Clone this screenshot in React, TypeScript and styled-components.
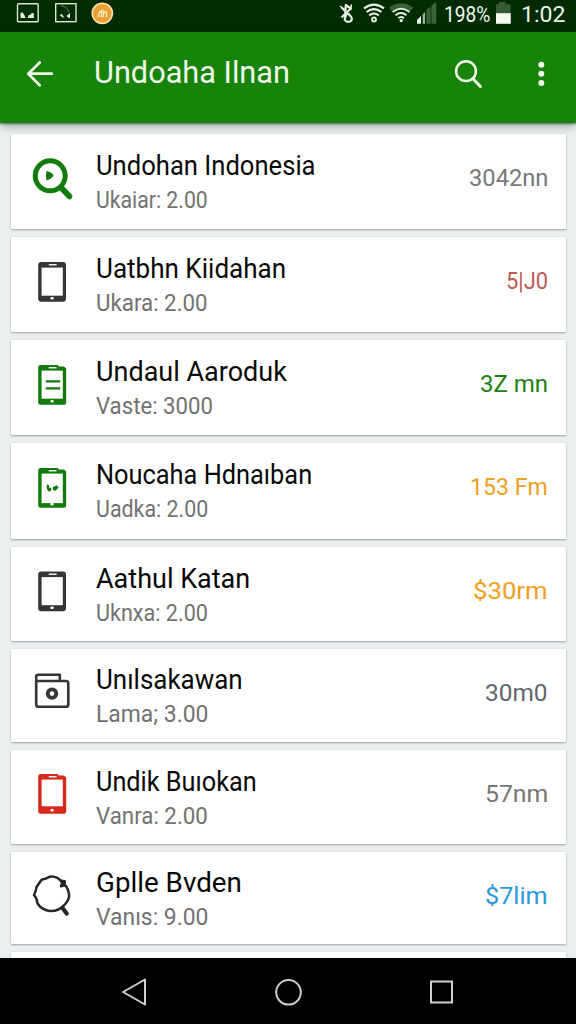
import React, { useLayoutEffect, useRef, useState } from "react";
import styled, { createGlobalStyle } from "styled-components";

const GlobalStyle = createGlobalStyle`
  * { box-sizing: border-box; }
  body { margin: 0; background: #000; font-family: Roboto, "Liberation Sans", sans-serif; }
  svg { display: block; flex: none; }
`;

const Screen = styled.div`
  width: 576px;
  height: 1024px;
  display: flex;
  flex-direction: column;
  overflow: hidden;
  background: #ebeff0;
`;

const StatusBar = styled.div`
  flex: none;
  height: 32px;
  display: flex;
  align-items: flex-start;
  justify-content: space-between;
  background: #022b01;
  color: #e9f5e6;
  font-size: 22.5px;
  line-height: 28px;
`;

const StatusGroup = styled.div<{ $end?: boolean }>`
  display: flex;
  padding-right: ${(p) => (p.$end ? 11 : 0)}px;
`;

const StatusText = styled.div<{ $gap: number }>`
  margin-left: ${(p) => p.$gap}px;
`;

const Toolbar = styled.header`
  flex: none;
  height: 91px;
  display: flex;
  align-items: flex-start;
  background: #17830b;
  color: #effbe8;
  box-shadow: 0 1px 2px rgba(40, 70, 40, 0.65), 0 3px 9px rgba(0, 0, 0, 0.32);
  z-index: 1;
`;

const ToolbarTitle = styled.h1`
  margin: 23px 0 0 18px;
  flex: 1;
  font-size: 31px;
  font-weight: 400;
  line-height: 36px;
`;

const List = styled.main`
  flex: 1;
  min-height: 0;
  overflow: hidden;
  padding: 11px 10px 0 11px;
  display: grid;
  grid-template-rows: 103px 103px 103px 104px 102px 101px 102px 100px 103px;
`;

const Card = styled.article`
  display: flex;
  align-items: flex-start;
  margin-bottom: 8px;
  padding: 0 18px 0 19px;
  background: #fefffe;
  border-radius: 1px;
  box-shadow: 0 1px 2px rgba(60, 70, 75, 0.42), 0 0 2px rgba(60, 70, 75, 0.1);
`;

const IconSlot = styled.div`
  width: 66px;
  padding-top: 23px;
`;

const Details = styled.div<{ $raise: number }>`
  flex: 1;
  padding-top: ${(p) => 16 - p.$raise}px;
`;

const Name = styled.div`
  font-size: 27px;
  line-height: 32px;
  color: #080808;
`;

const Sub = styled.div`
  margin-top: 4px;
  font-size: 23.5px;
  line-height: 28px;
  color: #727272;
`;

const Value = styled.div<{ $color: string }>`
  padding-top: 30px;
  font-size: 24px;
  line-height: 28px;
  color: ${(p) => p.$color};
`;

const NavBar = styled.nav`
  flex: none;
  height: 66px;
  display: flex;
  align-items: center;
  justify-content: center;
  gap: 113px;
  padding: 2px 0 0 0;
  background: #000;
`;

const FitBox = styled.div`
  white-space: nowrap;
`;

const FitInner = styled.span`
  display: inline-block;
  transform-origin: 0 50%;
`;

/* Condenses or widens one line of text so that it fills the given width. */
function Fit({ width, children }: { width: number; children: string }) {
  const ref = useRef<HTMLSpanElement>(null);
  const [scale, setScale] = useState(1);
  useLayoutEffect(() => {
    if (ref.current) setScale(width / ref.current.offsetWidth);
  }, [width, children]);
  return (
    <FitBox style={{ width }}>
      <FitInner ref={ref} style={{ transform: `scaleX(${scale})` }}>{children}</FitInner>
    </FitBox>
  );
}

const DARK = "#333536";
const GREEN = "#137a0c";

type PhoneProps = { color: string; notch?: boolean; chin?: number; top?: number; children?: React.ReactNode };

function Phone({ color, notch, chin = 6, top = 0, children }: PhoneProps) {
  return (
    <svg width="44" height="44" viewBox={`0 ${-top} 44 44`}>
      <path
        fill={color}
        d={notch
          ? "M10.5 2H27.5L29 3.6H34L36.2 5.6V39.5Q36.2 41.7 34 41.7H10.5Q8.2 41.7 8.2 39.5V4.2Q8.2 2 10.5 2Z"
          : "M11.3 2H33Q36 2 36 5V38.7Q36 41.7 33 41.7H11.3Q8.2 41.7 8.2 38.7V5Q8.2 2 11.3 2Z"}
      />
      <rect x="11.6" y="7.6" width="21.2" height={34.1 - chin} fill="#fefffe" />
      <rect x="18.7" y="4" width="8" height="1.5" rx="0.5" fill="#e8eee8" />
      <rect x="20.4" y="37" width="3.4" height="2.6" rx="1" fill="#f4f8f4" />
      {children}
    </svg>
  );
}

function PlaySearch() {
  return (
    <svg width="44" height="44" viewBox="0 0 44 44" fill="none">
      <circle cx="20.2" cy="18.8" r="15" stroke={GREEN} strokeWidth="5" />
      <path d="M31 30.5L39.3 39.3" stroke={GREEN} strokeWidth="6" strokeLinecap="round" />
      <path d="M16.6 13.8Q23 16 23.6 18.8Q21.3 22.2 16.6 23.5Q15.2 18.8 16.6 13.8Z" fill={GREEN} />
    </svg>
  );
}

function Wallet() {
  return (
    <svg width="44" height="44" viewBox="0 0.8 44 44" fill="none" stroke={DARK} strokeWidth="2.6" strokeLinejoin="round">
      <path d="M7 9.8H36.2Q38.3 10 38.3 12.4V33.2Q38.3 35.6 36 35.6H8.5Q6.2 35.6 6.2 33.2V5.5Q6.2 3.6 8.3 3.6H29.8V9.4" />
      <circle cx="22" cy="22.4" r="4.3" strokeWidth="3.8" />
    </svg>
  );
}

function RoughSearch() {
  return (
    <svg width="44" height="44" viewBox="0 2.2 44 44" fill="none" stroke="#242627" strokeWidth="2.5" strokeLinejoin="round" strokeLinecap="round">
      <path d="M32.3 9.4Q26.5 2.7 19.5 4Q15.8 6 11.6 7Q9.2 10.5 6.4 14.4Q6.2 18 4 22.4Q7 25.2 7.4 30.4Q11 37 19.5 38.2Q27.5 39 33.3 33.2Q40.7 26.5 38.7 19.8Q37 13 34 11.7" />
      <path d="M31 8L34.8 8.5L34.5 12.5L31 13.4L32.2 10.2Z" fill="#242627" />
      <path d="M32.5 35.2L36.7 40.7" strokeWidth="4.2" />
    </svg>
  );
}

type Row = {
  icon: React.ReactNode;
  name: string; nameW: number;
  sub: string; subW: number;
  value: string; valueW: number;
  color: string;
  raise?: number;
};

const rows: Row[] = [
  { icon: <PlaySearch />, name: "Undohan Indonesia", nameW: 220, sub: "Ukaiar: 2.00", subW: 112, value: "3042nn", valueW: 79, color: "#78787a" },
  { icon: <Phone color={DARK} />, name: "Uatbhn Kiidahan", nameW: 190, sub: "Ukara: 2.00", subW: 112, value: "5|J0", valueW: 42, color: "#bd5a56" },
  {
    icon: (
      <Phone color={GREEN} notch>
        <path d="M15.8 18.3H30.2M15.8 25.3H30.2" stroke={GREEN} strokeWidth="2.3" />
      </Phone>
    ),
    name: "Undaul Aaroduk", nameW: 191, sub: "Vaste: 3000", subW: 117, value: "3Z mn", valueW: 68, color: "#21810f",
  },
  {
    icon: (
      <Phone color={GREEN} notch chin={4.6}>
        <path d="M17 18.5Q19.5 18 19.3 22L21.2 21.5V24.5L19 25.7Q15.5 22.5 17 18.5ZM23 21L25.5 20L27 19.2L28.7 21.5L25.3 25L22.7 23.5Z" fill={GREEN} />
      </Phone>
    ),
    name: "Noucaha Hdnaıban", nameW: 216, sub: "Uadka: 2.00", subW: 112, value: "153 Fm", valueW: 78, color: "#f0a01f",
  },
  { icon: <Phone color={DARK} top={-0.5} />, name: "Aathul Katan", nameW: 154, sub: "Uknxa: 2.00", subW: 112, value: "$30rm", valueW: 75, color: "#f0a01f" },
  { icon: <Wallet />, name: "Unılsakawan", nameW: 147, sub: "Lama; 3.00", subW: 112, value: "30m0", valueW: 63, color: "#60676c", raise: 1.5 },
  { icon: <Phone color="#d6281c" notch chin={7.4} top={-1} />, name: "Undik Buıokan", nameW: 161, sub: "Vanra: 2.00", subW: 112, value: "57nm", valueW: 63, color: "#787575" },
  { icon: <RoughSearch />, name: "Gplle Bvden", nameW: 146, sub: "Vanıs: 9.00", subW: 112, value: "$7lim", valueW: 63, color: "#2a9ade", raise: 1 },
];

function NotificationIcons() {
  return (
    <svg width="120" height="28" viewBox="0 0 120 28" fill="none">
      <rect x="17.5" y="3.7" width="20.7" height="18" rx="1" stroke="#d9e8d5" strokeWidth="1.4" />
      <path d="M20.5 18V13L22.5 12.2L24.5 15.2L25.5 18ZM27.7 18L28.5 15.3L31 14.5L31.5 13H33.8V18Z" fill="#e4f1e0" />
      <rect x="55.7" y="3.7" width="20.3" height="18" stroke="#d9e8d5" strokeWidth="1.4" />
      <path d="M61 5.5Q68 6.5 68.5 12" stroke="#4d8a49" />
      <path d="M59.5 15L62 14L64.5 18L62 17ZM66.5 16L70 13V18L68 17.5Z" fill="#e4f1e0" />
      <circle cx="102.3" cy="13.3" r="10.1" fill="#eba136" stroke="#f8e2ad" strokeWidth="1.6" />
      <path d="M98 17L100 11.5L102 12L101 17M99 12.5L103.5 10.2M103 17L104 12H107M106.5 13V17" stroke="#fff0c8" strokeWidth="1.3" />
    </svg>
  );
}

function SignalIcons() {
  return (
    <svg width="105" height="28" viewBox="334 0 105 28" fill="none">
      <path d="M341.5 7.5L351 16.5Q353 19.5 350 21.5Q346.5 22.5 344.8 20L345.8 5L350.8 8.5L341.5 17.5" stroke="#e6f2e2" strokeWidth="2.2" strokeLinejoin="round" />
      <path d="M340 6L343 8.5M351.5 4.5L350.5 10M344.5 20L347 14H350" stroke="#e6f2e2" strokeWidth="1.5" />
      <g stroke="#e6f2e2" strokeWidth="2">
        <path d="M364 8.4Q374 0.8 384 8.4" />
        <path d="M366.5 12Q374 6.2 381.5 12" />
        <path d="M369.2 15.4Q374 11.5 378.8 15.4" />
        <circle cx="374" cy="19.5" r="2" strokeWidth="1.8" />
      </g>
      <path d="M389 7.5Q401 -1 413.3 7.5L409 12.5Q401 6.5 393 12.5Z" fill="#3a6139" />
      <g stroke="#e6f2e2" strokeWidth="1.8">
        <path d="M392.7 12Q401 5.2 409.5 12" />
        <path d="M395.5 15.2Q401 10.8 406.5 15.2" />
        <path d="M398.2 18.2Q401 15.7 404 18.2" />
        <circle cx="401.2" cy="20.6" r="0.8" />
      </g>
      <path d="M417 23.8V20L421 16V23.8Z" fill="#e6f2e2" />
      <path d="M422.7 23.8V14.5L425 12V23.8Z" fill="#9db59a" />
      <path d="M426.3 23.8V10L430.5 6.5V23.8ZM431.3 23.8V5.5L436.3 2V23.8Z" fill="#3a6139" />
    </svg>
  );
}

function Battery() {
  return (
    <svg width="18" height="28" viewBox="0 0 18 28">
      <path d="M2 4.2H5V2H11.5V4.2H16.5V13.5H2Z" fill="#375a35" />
      <rect x="2" y="13.2" width="14.8" height="10.6" fill="#f4fbf1" />
    </svg>
  );
}

function ArrowIcon() {
  return (
    <svg width="76" height="91" viewBox="0 32 76 91" fill="none" stroke="#effbe8" strokeWidth="2.7" strokeLinecap="round" strokeLinejoin="round">
      <path d="M51.8 73.7H28.5M39.7 62.5L28.3 73.7L39.7 85.2" />
    </svg>
  );
}

function ToolbarActions() {
  return (
    <svg width="136" height="91" viewBox="440 32 136 91" fill="none">
      <circle cx="466" cy="71.2" r="9.9" stroke="#effbe8" strokeWidth="2.5" />
      <path d="M473.2 79L480.4 86.5" stroke="#effbe8" strokeWidth="3" strokeLinecap="round" />
      <g fill="#effbe8">
        <circle cx="541.3" cy="64.7" r="3" />
        <circle cx="541.3" cy="73.8" r="3" />
        <circle cx="541.3" cy="83" r="3" />
      </g>
    </svg>
  );
}

export default function App() {
  return (
    <>
      <GlobalStyle />
      <Screen>
        <StatusBar>
          <NotificationIcons />
          <StatusGroup $end>
            <SignalIcons />
            <StatusText $gap={5}><Fit width={46}>198%</Fit></StatusText>
            <StatusText $gap={4}><Battery /></StatusText>
            <StatusText $gap={9}><Fit width={44}>1:02</Fit></StatusText>
          </StatusGroup>
        </StatusBar>
        <Toolbar>
          <ArrowIcon />
          <ToolbarTitle><Fit width={196}>Undoaha Ilnan</Fit></ToolbarTitle>
          <ToolbarActions />
        </Toolbar>
        <List>
          {rows.map((r) => (
            <Card key={r.name}>
              <IconSlot>{r.icon}</IconSlot>
              <Details $raise={r.raise ?? 0}>
                <Name><Fit width={r.nameW}>{r.name}</Fit></Name>
                <Sub><Fit width={r.subW}>{r.sub}</Fit></Sub>
              </Details>
              <Value $color={r.color}><Fit width={r.valueW}>{r.value}</Fit></Value>
            </Card>
          ))}
          <Card />
        </List>
        <NavBar>
          <svg width="40" height="40" viewBox="0 0 40 40" fill="none" stroke="#cfcfcf" strokeWidth="2">
            <path d="M8 20L30 7.5V32.5Z" strokeLinejoin="round" />
          </svg>
          <svg width="40" height="40" viewBox="0 0 40 40" fill="none" stroke="#cfcfcf" strokeWidth="2">
            <circle cx="20.5" cy="20.3" r="12.3" />
          </svg>
          <svg width="40" height="40" viewBox="0 0 40 40" fill="none" stroke="#cfcfcf" strokeWidth="2">
            <rect x="10" y="9.5" width="21" height="21" />
          </svg>
        </NavBar>
      </Screen>
    </>
  );
}
